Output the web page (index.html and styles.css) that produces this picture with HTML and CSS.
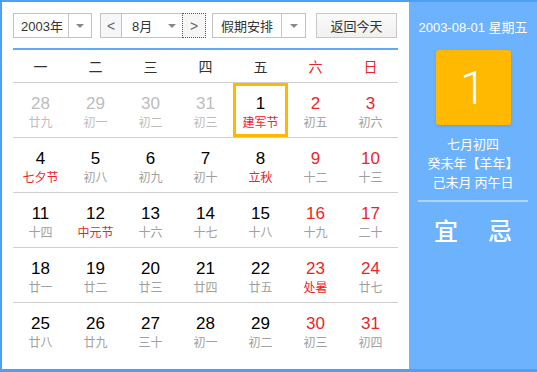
FILE: index.html
```html
<!DOCTYPE html>
<html lang="zh">
<head>
<meta charset="utf-8">
<link rel="stylesheet" href="styles.css">
</head>
<body>
<div class="cal">
  <div class="main">
    <div class="toolbar">
      <div class="select year"><span class="label">2003年</span><span class="arrow"><i class="tri"></i></span></div>
      <div class="month-group">
        <span class="nav prev">&lt;</span>
        <div class="select month"><span class="label">8月</span><span class="arrow plain"><i class="tri"></i></span></div>
        <span class="nav next">&gt;</span>
      </div>
      <div class="select holiday"><span class="label">假期安排</span><span class="arrow"><i class="tri"></i></span></div>
      <div class="btn today">返回今天</div>
    </div>
    <div class="weekdays">
      <span>一</span><span>二</span><span>三</span><span>四</span><span>五</span><span class="we">六</span><span class="we">日</span>
    </div>
    <div class="grid">
      <div class="row">
        <div class="cell other"><b>28</b><i>廿九</i></div>
        <div class="cell other"><b>29</b><i>初一</i></div>
        <div class="cell other"><b>30</b><i>初二</i></div>
        <div class="cell other"><b>31</b><i>初三</i></div>
        <div class="cell selected"><b>1</b><i class="fest">建军节</i></div>
        <div class="cell we"><b>2</b><i>初五</i></div>
        <div class="cell we"><b>3</b><i>初六</i></div>
      </div>
      <div class="row">
        <div class="cell"><b>4</b><i class="fest">七夕节</i></div>
        <div class="cell"><b>5</b><i>初八</i></div>
        <div class="cell"><b>6</b><i>初九</i></div>
        <div class="cell"><b>7</b><i>初十</i></div>
        <div class="cell"><b>8</b><i class="fest">立秋</i></div>
        <div class="cell we"><b>9</b><i>十二</i></div>
        <div class="cell we"><b>10</b><i>十三</i></div>
      </div>
      <div class="row">
        <div class="cell"><b>11</b><i>十四</i></div>
        <div class="cell"><b>12</b><i class="fest">中元节</i></div>
        <div class="cell"><b>13</b><i>十六</i></div>
        <div class="cell"><b>14</b><i>十七</i></div>
        <div class="cell"><b>15</b><i>十八</i></div>
        <div class="cell we"><b>16</b><i>十九</i></div>
        <div class="cell we"><b>17</b><i>二十</i></div>
      </div>
      <div class="row">
        <div class="cell"><b>18</b><i>廿一</i></div>
        <div class="cell"><b>19</b><i>廿二</i></div>
        <div class="cell"><b>20</b><i>廿三</i></div>
        <div class="cell"><b>21</b><i>廿四</i></div>
        <div class="cell"><b>22</b><i>廿五</i></div>
        <div class="cell we"><b>23</b><i class="fest">处暑</i></div>
        <div class="cell we"><b>24</b><i>廿七</i></div>
      </div>
      <div class="row">
        <div class="cell"><b>25</b><i>廿八</i></div>
        <div class="cell"><b>26</b><i>廿九</i></div>
        <div class="cell"><b>27</b><i>三十</i></div>
        <div class="cell"><b>28</b><i>初一</i></div>
        <div class="cell"><b>29</b><i>初二</i></div>
        <div class="cell we"><b>30</b><i>初三</i></div>
        <div class="cell we"><b>31</b><i>初四</i></div>
      </div>
    </div>
  </div>
  <div class="panel">
    <div class="pdate">2003-08-01 星期五</div>
    <div class="bigday">1</div>
    <div class="lunar">
      <div>七月初四</div>
      <div>癸未年【羊年】</div>
      <div>己未月 丙午日</div>
    </div>
    <div class="sep"></div>
    <div class="yiji"><span>宜</span><span>忌</span></div>
  </div>
</div>
</body>
</html>
```

FILE: styles.css
```css
* { box-sizing: border-box; }
html, body { margin: 0; padding: 0; background: #fff; }
body { font-family: "Liberation Sans", "Noto Sans CJK SC", sans-serif; }

.cal {
  width: 537px;
  height: 372px;
  display: flex;
  border-left: 2px solid #4f9ff6;
  border-top: 2px solid #4f9ff6;
  border-bottom: 3px solid #4f9ff6;
}

.main {
  width: 407px;
  padding: 11px 11px 0 11px;
  background: #fff;
}

.toolbar {
  display: flex;
  height: 25px;
  font-size: 13px;
  color: #333;
}

.select {
  display: flex;
  border: 1px solid #c2c2c2;
  background: #fff;
  height: 25px;
}
.select .label {
  flex: 1;
  display: flex;
  align-items: center;
  justify-content: center;
}
.select .arrow {
  width: 23px;
  border-left: 1px solid #c8c8c8;
  display: flex;
  align-items: center;
  justify-content: center;
}
.select .arrow.plain { border-left: none; width: 20px; }
.tri {
  width: 0; height: 0;
  border-left: 4px solid transparent;
  border-right: 4px solid transparent;
  border-top: 4px solid #888;
}

.year { width: 79px; margin-right: 8px; }
.year .label { padding-left: 2px; }

.month-group {
  display: flex;
  width: 106px;
  margin-right: 6px;
}
.nav {
  width: 22px;
  height: 25px;
  border: 1px solid #c2c2c2;
  background: #f6f6f6;
  display: flex;
  align-items: center;
  justify-content: center;
  color: #666;
  font-size: 14px;
}
.month {
  width: 60px;
  border-left: none;
  border-right: none;
}
.month .label { justify-content: flex-start; padding-left: 10px; }
.nav.next {
  width: 24px;
  border: 1px dotted #555;
}

.holiday { width: 94px; margin-right: 10px; }
.holiday .arrow { width: 24px; }

.btn {
  width: 81px;
  height: 25px;
  border: 1px solid #c8c8c8;
  background: linear-gradient(#fbfbfb, #f0f0f0);
  display: flex;
  align-items: center;
  justify-content: center;
}

.weekdays {
  margin-top: 10px;
  border-top: 2px solid #63aaf6;
  display: grid;
  grid-template-columns: repeat(7, 55px);
  height: 34px;
  align-items: center;
  font-size: 14px;
  color: #333;
  font-family: "Noto Sans CJK SC", sans-serif;
}
.weekdays span { text-align: center; line-height: 16px; }
.weekdays .we { color: #e8262a; }

.row {
  display: grid;
  grid-template-columns: repeat(7, 55px);
  border-top: 1px solid #cfcfcf;
  height: 55px;
}
.cell {
  height: 54px;
  padding-top: 11px;
  display: flex;
  flex-direction: column;
  align-items: center;
}
.cell b {
  font-weight: normal;
  font-size: 17px;
  line-height: 20px;
  color: #000;
}
.cell i {
  font-style: normal;
  font-size: 12px;
  line-height: 16px;
  color: #a0a0a0;
  font-family: "Noto Sans CJK SC", sans-serif;
}
.cell.we b { color: #e8262a; }
.cell i.fest { color: #e8262a; }
.cell.other b, .cell.other i { color: #bdbdbd; }
.cell.selected {
  border: 3px solid #ffb700;
  padding-top: 8px;
  height: 54px;
}

.panel {
  flex: 1;
  background: #6db2fd;
  color: #fff;
  display: flex;
  flex-direction: column;
  align-items: center;
  font-family: "Liberation Sans", "Noto Sans CJK SC", sans-serif;
}
.pdate {
  margin-top: 18px;
  font-size: 13px;
  line-height: 16px;
}
.bigday {
  margin-top: 14px;
  width: 75px;
  height: 75px;
  border-radius: 3px;
  background: #ffb900;
  display: flex;
  align-items: center;
  justify-content: center;
  font-family: Roboto, "Liberation Sans", sans-serif;
  font-weight: 300;
  font-size: 47px;
  box-shadow: 0 1px 3px rgba(0,0,0,0.12);
}
.lunar {
  margin-top: 9px;
  font-size: 13px;
  line-height: 19px;
  text-align: center;
  font-family: "Noto Sans CJK SC", sans-serif;
}
.sep {
  margin-top: 9px;
  width: 110px;
  height: 2px;
  background: rgba(255,255,255,0.45);
}
.yiji {
  margin-top: 15px;
  display: flex;
  gap: 30px;
  font-size: 24px;
  line-height: 26px;
  font-family: "Noto Sans CJK SC", sans-serif;
  font-weight: 500;
}
```
